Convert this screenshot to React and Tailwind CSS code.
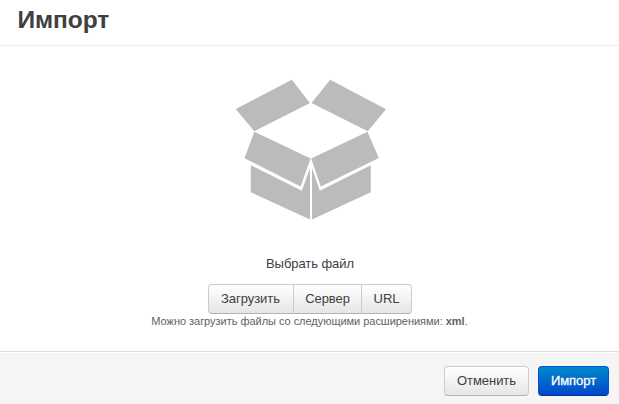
function BoxIcon() {
  return (
    <svg className="ml-[2px]" width="152" height="142" viewBox="235 79 152 142" fill="#bbbbbb" aria-hidden="true">
      <path d="M291.8 79.7 310 103 254.3 131.2 235.7 109Z" />
      <path d="M330.2 79.7 386 109.2 367.7 131.2 311.5 103Z" />
      <path d="M254.3 131.8 310.6 158.5 300.6 186.5 244.5 158.3Z" />
      <path d="M367.5 131.8 378.8 158 320.8 186.5 311.2 158.5Z" />
      <path d="M250.8 165.2 301.8 190.7 310 168V219.5L250.8 192.2Z" />
      <path d="M370.8 165.2 319.8 190.7 312 168V219.5L370.8 192.2Z" />
    </svg>
  );
}

const light =
  "h-[30px] border border-[#cccccc] border-b-[#b3b3b3] bg-linear-to-b from-white to-[#e6e6e6] text-[#404040]";

export default function App() {
  return (
    <div className="flex h-[404px] w-[619px] flex-col overflow-hidden bg-white font-['Liberation_Sans',Arial,sans-serif] text-[13px] leading-[18px] tracking-[-0.06px] text-[#404040]">
      <header className="h-[46px] shrink-0 border-b border-[#eeeeee] pl-[17.5px]">
        <h1 className="text-[24.5px] leading-[40px] font-bold text-[#404040]">Импорт</h1>
      </header>
      <main className="flex flex-1 flex-col items-center pt-[33px]">
        <BoxIcon />
        <p className="mt-[34px] pl-px">Выбрать файл</p>
        <div className="mt-[11px] flex">
          <button className={`${light} w-[86px] rounded-l-[4px]`}>Загрузить</button>
          <button className={`${light} -ml-px w-[69px] pl-px`}>Сервер</button>
          <button className={`${light} -ml-px w-[51px] rounded-r-[4px] pl-px`}>URL</button>
        </div>
        <p className="text-[11px] leading-[15px] tracking-[-0.03px] text-[#626262]">
          Можно загрузить файлы со следующими расширениями: <strong>xml</strong>.
        </p>
      </main>
      <footer className="flex h-[53px] shrink-0 justify-end gap-[9px] border-t border-[#dddddd] bg-[#f5f5f5] pt-[14px] pr-[10px] shadow-[inset_0_1px_0_#ffffff]">
        <button className={`${light} w-[85px] rounded-[4px]`}>Отменить</button>
        <button className="h-[30px] w-[71px] rounded-[4px] border border-[#0055cc] border-b-[#003399] bg-linear-to-b from-[#0088cc] to-[#0044cc] text-white [-webkit-text-stroke:0.3px_white] [text-shadow:0_-1px_0_rgba(0,0,0,0.25)]">
          Импорт
        </button>
      </footer>
    </div>
  );
}
